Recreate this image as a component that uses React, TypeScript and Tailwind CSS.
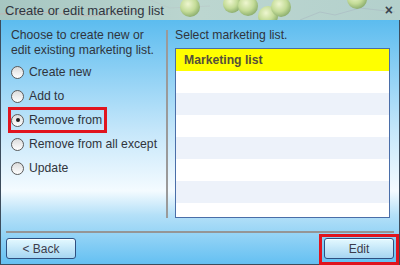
import React from "react";

// Options shown in the left column
const OPTIONS = [
  { id: "create", label: "Create new" },
  { id: "add", label: "Add to" },
  { id: "remove", label: "Remove from" },
  { id: "removeAll", label: "Remove from all except" },
  { id: "update", label: "Update" },
];

const ROWS = 7;

// Map-like backdrop behind the title text
const MapBackdrop = () => (
  <svg
    className="absolute inset-0"
    width="400"
    height="20"
    viewBox="0 0 400 20"
  >
    <defs>
      <radialGradient id="ball" cx="0.4" cy="0.35" r="0.65">
        <stop offset="0%" stopColor="#eef6cf" />
        <stop offset="60%" stopColor="#c4dc98" />
        <stop offset="100%" stopColor="#8fb070" />
      </radialGradient>
    </defs>
    <path d="M0 14 L40 12 L90 16 L140 11" stroke="#c9a9a9" strokeWidth="0.6" fill="none" />
    <path d="M300 20 L320 12 L335 15 L360 8 L395 12" stroke="#a9b9c2" strokeWidth="0.6" fill="none" />
    <path d="M150 0 L170 8 L210 6" stroke="#b9c8c8" strokeWidth="0.6" fill="none" />
    <circle cx="190" cy="7" r="10" fill="url(#ball)" />
    <circle cx="232" cy="4" r="9" fill="url(#ball)" />
    <circle cx="248" cy="6" r="10" fill="url(#ball)" />
    <circle cx="268" cy="16" r="10" fill="url(#ball)" />
    <circle cx="281" cy="7" r="10" fill="url(#ball)" />
    <circle cx="357" cy="-1" r="10" fill="url(#ball)" />
  </svg>
);

const Radio = ({ checked }: { checked: boolean }) => (
  <span className="flex h-[13px] w-[13px] items-center justify-center rounded-full border border-[#5a5a5a] bg-gradient-to-b from-[#dcdcdc] to-white">
    {checked && <span className="h-[4px] w-[4px] rounded-full bg-[#222]" />}
  </span>
);

export default function App() {
  return (
    <div
      className="flex h-[265px] w-[400px] flex-col overflow-hidden text-[12.2px] text-[#30343c]"
      style={{ fontFamily: '"Liberation Sans", Arial, sans-serif' }}
    >
      {/* Title bar */}
      <div className="relative h-[20px] shrink-0 bg-gradient-to-r from-[#a6c6c1] via-[#bcd6d0] to-[#b3d0cc]">
        <MapBackdrop />
        <div className="relative flex h-full items-center justify-between pl-[5px] pr-[7px]">
          <span className="text-[13px] leading-none text-[#2f3540]">
            Create or edit marketing list
          </span>
          <span className="text-[14px] font-bold leading-none text-[#3a4450]">×</span>
        </div>
      </div>

      {/* Body */}
      <div className="flex flex-1 flex-col border-x border-b border-[#3c4c5c] bg-[linear-gradient(to_bottom,#5cbcef_0%,#c4e6fa_45%,#f4fbff_70%,#b4e0f8_80%,#64c0f2_100%)] px-[5px]">
        <div className="flex h-[198px] pt-[8px]">
          {/* Left column */}
          <div className="w-[160px] pl-[5px]">
            <p className="leading-[15px]">
              Choose to create new or
              <br />
              edit existing marketing list.
            </p>
            <div className="mt-[2px] flex flex-col">
              {OPTIONS.map((o) => (
                <div key={o.id} className="relative flex h-[24px] items-center gap-[5px]">
                  <Radio checked={o.id === "remove"} />
                  <span>{o.label}</span>
                  {o.id === "remove" && (
                    <span className="absolute left-[-3px] top-[-1px] h-[26px] w-[99px] border-[3px] border-[#e0141e]" />
                  )}
                </div>
              ))}
            </div>
          </div>

          {/* Divider */}
          <div className="mt-[2px] w-[2px] bg-[#9a9a9a]" />

          {/* Right column */}
          <div className="flex flex-1 flex-col pl-[7px] pr-[4px]">
            <p className="leading-[15px]">Select marketing list.</p>
            <div className="mt-[5px] flex flex-1 flex-col overflow-hidden border border-[#4a6ea8] bg-white">
              <div className="flex h-[22px] shrink-0 items-center bg-[#ffff00] pl-[8px] font-bold text-[#55503a]">
                Marketing list
              </div>
              {Array.from({ length: ROWS }).map((_, i) => (
                <div
                  key={i}
                  className={`h-[22px] shrink-0 ${i % 2 === 1 ? "bg-[#edf2fa]" : "bg-white"}`}
                />
              ))}
            </div>
          </div>
        </div>

        {/* Separator */}
        <div className="mt-[13px] h-[2px] bg-[#959595]" />

        {/* Buttons */}
        <div className="mt-[5px] flex items-center justify-between">
          <button className="h-[21px] w-[70px] rounded-[3px] border border-[#2f4f80] bg-gradient-to-b from-[#e4f9ff] to-[#a6d6f2] text-[12px] text-[#3c3c4c] shadow-[inset_0_1px_0_#ffffff]">
            &lt; Back
          </button>
          <div className="relative">
            <button className="h-[21px] w-[70px] rounded-[3px] border border-[#2f4f80] bg-gradient-to-b from-[#e4f9ff] to-[#a6d6f2] text-[12px] text-[#3c3c4c] shadow-[inset_0_1px_0_#ffffff]">
              Edit
            </button>
            <span className="absolute left-[-5px] top-[-4px] h-[31px] w-[80px] border-[3px] border-[#e0141e]" />
          </div>
        </div>
      </div>
    </div>
  );
}
